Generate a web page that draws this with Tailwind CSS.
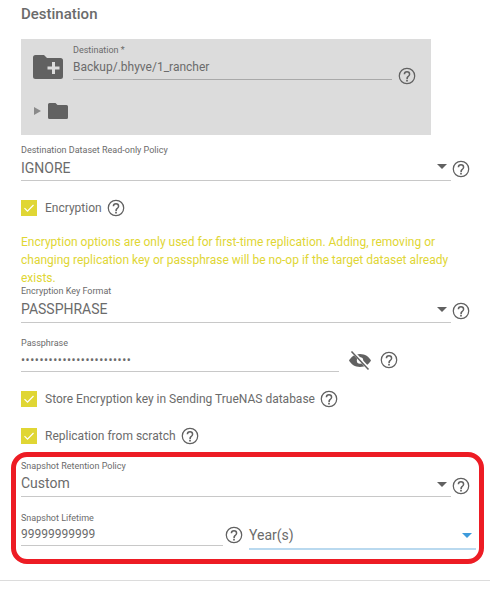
<!DOCTYPE html>
<html>
<head>
<meta charset="utf-8">
<script src="https://cdn.jsdelivr.net/npm/@tailwindcss/browser@4"></script>
</head>
<body class="bg-white">
<svg width="0" height="0" class="absolute">
  <defs>
    <symbol id="help" viewBox="0 0 24 24"><path fill="#616161" d="M12 2a10 10 0 1 0 0 20 10 10 0 0 0 0-20zm0 18.500a8.500 8.500 0 1 1 0-17 8.500 8.500 0 0 1 0 17z"/><path fill="#616161" d="M11 16.500h2v2h-2zM12 6a4 4 0 0 0-4 4h1.800a2.200 2.200 0 1 1 4.400 0c0 2-3 2-3 5.500h1.800c0-2.500 3-3 3-5.500a4 4 0 0 0-4-4z"/></symbol>
    <symbol id="check" viewBox="0 0 16 16"><path fill="none" stroke="#fff" stroke-width="1.200" d="M3.500 8.200l3 3L12.500 5"/></symbol>
  </defs>
</svg>
<div class="relative h-[597px] w-[490px] overflow-hidden font-['Roboto',sans-serif] text-[#6b6b6b]">
  <div class="pl-[21px]">
    <h2 class="h-[39px] pt-[5px] text-[15px] leading-[18px] font-medium">Destination</h2>

    <div class="h-[96px] w-[410px] bg-[#dcdcdc] pt-[5px]">
      <div class="flex h-[36px]">
        <svg class="mt-[11px] ml-[12px] h-[24px] w-[30px]" viewBox="0 0 30 24"><path fill="#616161" d="M2.500 0h8.500l3 3h13.500a2.500 2.500 0 0 1 2.500 2.500v16a2.500 2.500 0 0 1-2.500 2.500h-25A2.500 2.500 0 0 1 0 21.500v-19A2.500 2.500 0 0 1 2.500 0z"/><path fill="#dcdcdc" d="M19 7h3v4.500h4.500v3H22V19h-3v-4.500h-4.500v-3H19z"/></svg>
        <div class="ml-[10px] w-[319px]">
          <div class="h-[13px] text-[9px] leading-[13px]">Destination *</div>
          <div class="h-[23px] border-b border-[#a9a9a9] pt-[1px] text-[12px] leading-[18px]">Backup/.bhyve/1_rancher</div>
        </div>
        <svg class="mt-[22px] ml-[5px] h-[20px] w-[20px]"><use href="#help"/></svg>
      </div>
      <div class="mt-[23px] ml-[13px] flex items-center gap-[7px]">
        <div class="h-0 w-0 border-y-[4px] border-l-[7px] border-y-transparent border-l-[#8a8a8a]"></div>
        <svg class="h-[16px] w-[20px]" viewBox="0 0 20 16"><path fill="#616161" d="M1.500 0h6l2 2h9A1.500 1.500 0 0 1 20 3.500v11a1.500 1.500 0 0 1-1.500 1.500h-17A1.500 1.500 0 0 1 0 14.500v-13A1.500 1.500 0 0 1 1.500 0z"/></svg>
      </div>
    </div>

    <div class="mt-[8px] flex h-[38px] w-[450px]">
      <div class="w-[430px] border-b border-[#c8c8c8]">
        <div class="h-[13px] pt-[1px] text-[9px] leading-[13px]">Destination Dataset Read-only Policy</div>
        <div class="flex h-[24px] items-center justify-between pr-[4px] text-[14px]">IGNORE<span class="-mt-[4px] h-0 w-0 border-x-[5px] border-t-[5px] border-x-transparent border-t-[#616161]"></span></div>
      </div>
      <svg class="mt-[16px] h-[20px] w-[20px]"><use href="#help"/></svg>
    </div>

    <div class="mt-[18px] flex h-[17px] items-center">
      <div class="h-[16px] w-[16px] bg-[#e0d634]"><svg class="h-[16px] w-[16px]"><use href="#check"/></svg></div>
      <span class="ml-[8px] text-[12px]">Encryption</span>
      <svg class="ml-[4px] h-[20px] w-[20px]"><use href="#help"/></svg>
    </div>

    <p class="mt-[17px] h-[51px] w-[440px] text-[12px] leading-[18px] text-[#e0d634]">Encryption options are only used for first-time replication. Adding, removing or changing replication key or passphrase will be no-op if the target dataset already exists.</p>

    <div class="flex h-[39px] w-[450px]">
      <div class="w-[430px] border-b border-[#c8c8c8]">
        <div class="h-[13px] pt-[1px] text-[9px] leading-[13px]">Encryption Key Format</div>
        <div class="flex h-[25px] items-center justify-between pr-[4px] text-[14px]">PASSPHRASE<span class="h-0 w-0 border-x-[5px] border-t-[5px] border-x-transparent border-t-[#616161]"></span></div>
      </div>
      <svg class="mt-[17px] h-[20px] w-[20px]"><use href="#help"/></svg>
    </div>

    <div class="mt-[13px] flex h-[36px]">
      <div class="w-[318px] border-b border-[#c8c8c8]">
        <div class="h-[13px] pt-[1px] text-[9px] leading-[13px]">Passphrase</div>
        <div class="flex h-[22px] items-center text-[12px] tracking-[0.55px]">••••••••••••••••••••••••</div>
      </div>
      <svg class="mt-[15px] ml-[10px] h-[19px] w-[22px]" viewBox="0 0 22 19"><path fill="#616161" d="M11 3C6 3 2 5.800 0 9.500c2 3.700 6 6.500 11 6.500s9-2.800 11-6.500C20 5.800 16 3 11 3z"/><circle cx="11" cy="9.500" r="3.200" fill="#fff"/><path stroke="#fff" stroke-width="3.200" d="M4 1l16 17"/><path stroke="#616161" stroke-width="1.500" d="M2.500 0.500l17 18"/></svg>
      <svg class="mt-[14px] ml-[8px] h-[20px] w-[20px]"><use href="#help"/></svg>
    </div>

    <div class="mt-[19px] flex h-[16px] items-center">
      <div class="h-[16px] w-[16px] bg-[#e0d634]"><svg class="h-[16px] w-[16px]"><use href="#check"/></svg></div>
      <span class="ml-[8px] text-[12px]">Store Encryption key in Sending TrueNAS database</span>
      <svg class="ml-[4px] h-[20px] w-[20px]"><use href="#help"/></svg>
    </div>

    <div class="mt-[21px] flex h-[16px] items-center">
      <div class="h-[16px] w-[16px] bg-[#e0d634]"><svg class="h-[16px] w-[16px]"><use href="#check"/></svg></div>
      <span class="ml-[8px] text-[12px]">Replication from scratch</span>
      <svg class="ml-[4px] h-[20px] w-[20px]"><use href="#help"/></svg>
    </div>

    <div class="mt-[15px] flex h-[38px] w-[450px]">
      <div class="w-[430px] border-b border-[#c8c8c8]">
        <div class="h-[13px] pt-[1px] text-[9px] leading-[13px]">Snapshot Retention Policy</div>
        <div class="flex h-[23px] items-center justify-between pr-[4px] text-[14px]">Custom<span class="mt-[1px] h-0 w-0 border-x-[5px] border-t-[5px] border-x-transparent border-t-[#616161]"></span></div>
      </div>
      <svg class="mt-[17px] h-[20px] w-[20px]"><use href="#help"/></svg>
    </div>

    <div class="mt-[14px] flex h-[39px]">
      <div class="h-[35px] w-[202px] border-b border-[#c8c8c8]">
        <div class="h-[13px] pt-[1px] text-[9px] leading-[13px]">Snapshot Lifetime</div>
        <div class="flex h-[20px] items-center text-[12px]">99999999999</div>
      </div>
      <svg class="mt-[14px] ml-[1px] h-[20px] w-[20px]"><use href="#help"/></svg>
      <div class="mt-[10px] ml-[5px] flex h-[29px] w-[227px] items-center justify-between border-b-2 border-[#b9d9ef] pt-[1px] pr-[4px] text-[14px]">Year(s)<span class="h-0 w-0 border-x-[5px] border-t-[5px] border-x-transparent border-t-[#3d9bdc]"></span></div>
    </div>
  </div>

  <div class="mt-[30px] border-t border-[#dcdcdc]"></div>

  <div class="pointer-events-none absolute top-[452px] left-[11px] h-[112px] w-[473px] rounded-[16px] border-[5px] border-[#ed1c24]"></div>
</div>
</body>
</html>
